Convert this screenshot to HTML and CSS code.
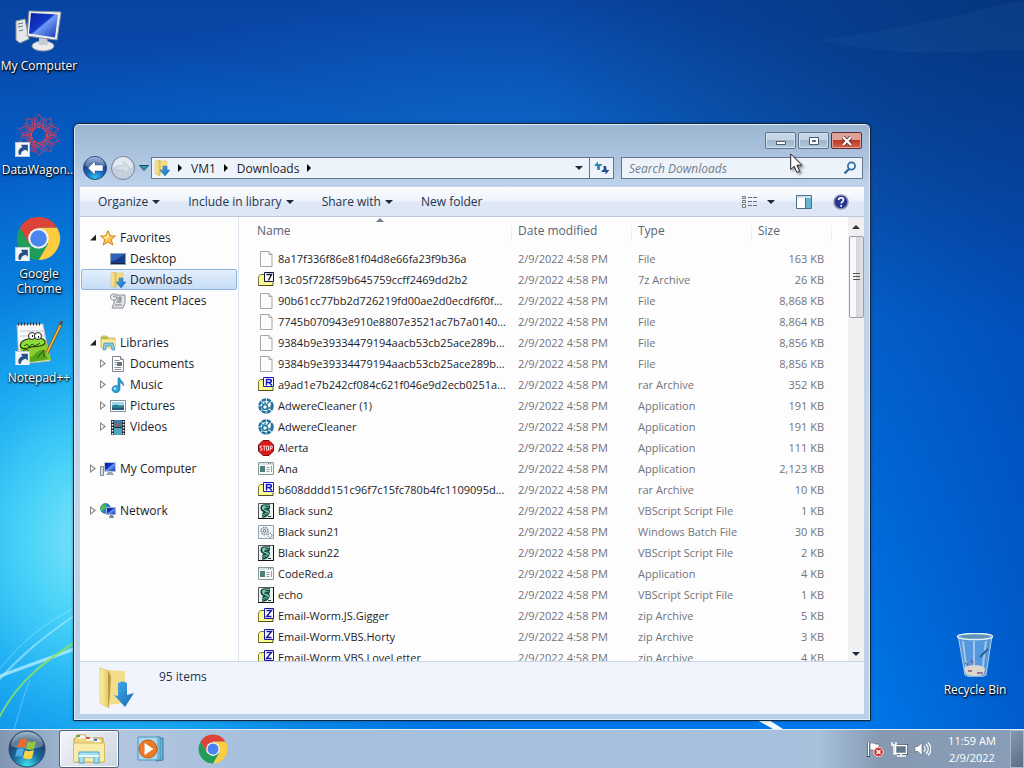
FILE: index.html
```html
<!DOCTYPE html>
<html lang="en">
<head>
  <meta charset="UTF-8" />
  <meta name="viewport" content="width=device-width, initial-scale=1.0" />
  <title>Downloads</title>
  <link rel="stylesheet" href="styles.css">
</head>
<body>
  <!-- shared icons -->
  <svg class="defs" width="0" height="0" aria-hidden="true">
    <defs>
      <linearGradient id="gScreen" x1="0" y1="0" x2="1" y2="1">
        <stop offset="0" stop-color="#0a1f9c" /><stop offset=".45" stop-color="#1238c8" /><stop offset=".5" stop-color="#6f9af5" /><stop offset="1" stop-color="#1535b8" />
      </linearGradient>
      <linearGradient id="gFolder" x1="0" y1="0" x2="1" y2="0">
        <stop offset="0" stop-color="#fbf0a8" /><stop offset="1" stop-color="#e8c65a" />
      </linearGradient>
      <linearGradient id="gArrow" x1="0" y1="0" x2="1" y2="1">
        <stop offset="0" stop-color="#49aeea" /><stop offset="1" stop-color="#1468b8" />
      </linearGradient>
      <radialGradient id="gBack" cx=".5" cy=".95" r=".9">
        <stop offset="0" stop-color="#35c8f4" /><stop offset=".45" stop-color="#1763b4" /><stop offset=".75" stop-color="#163f86" /><stop offset="1" stop-color="#a9c4e6" />
      </radialGradient>
      <radialGradient id="gOrb" cx=".5" cy=".95" r="1">
        <stop offset="0" stop-color="#3fe0f0" /><stop offset=".4" stop-color="#17699c" /><stop offset=".7" stop-color="#1d4169" /><stop offset="1" stop-color="#9db8cc" />
      </radialGradient>
      <symbol id="downloads" viewBox="0 0 16 16">
        <path d="M6 1h7v12H6z" fill="#f2dc86" stroke="#d9bd60" stroke-width=".5" />
        <path d="M1 1l5-1v16l-5-2z" fill="url(#gFolder)" stroke="#cfae50" stroke-width=".5" />
        <path d="M9 6h4v4h3l-5 6-5-6h3z" fill="url(#gArrow)" stroke="#145a9c" stroke-width=".4" />
      </symbol>
      <symbol id="star" viewBox="0 0 16 16">
        <path d="M8 .7l2.200 5 5.300.4-4.100 3.500 1.400 5.400L8 12l-4.800 3 1.400-5.400L.5 6.100l5.300-.4z" fill="#ffc54a" stroke="#c87a16" stroke-width=".9" />
        <path d="M8 3l1.200 3.600-2.600 2.800-3.400-2.600 3.300-.4z" fill="#ffe9a6" />
      </symbol>
      <symbol id="screen" viewBox="0 0 16 16">
        <path d="M0 2h16v12H0z" fill="#8fa2b8" /><path d="M1 3h14v9H1z" fill="#163c8c" /><path d="M1 3h14L4 10H1z" fill="#2f62b8" /><path d="M1 12h14v1H1z" fill="#223" />
      </symbol>
      <symbol id="recent" viewBox="0 0 16 16">
        <path d="M5 2h10v8l-2 5H2l2-5z" fill="#e3e5e8" stroke="#888d95" /><path d="M7 5h5M7 7h5M6 9h5M5 12h7M10 3v7" stroke="#7b818a" />
        <circle cx="3.700" cy="4" r="3.200" fill="#f3f4f6" stroke="#8b9098" /><path d="M3.700 2v2h2" fill="none" stroke="#666" stroke-width=".8" />
      </symbol>
      <symbol id="library" viewBox="0 0 16 16">
        <path d="M1 3l1-2h5l1 2h7v10H1z" fill="#f4d774" stroke="#c7a240" stroke-width=".7" /><path d="M2 5h13v8H2z" fill="#fbeb9e" /><path d="M1 3h7" stroke="#6dbb45" stroke-width="1.300" />
        <path d="M3 15l1-7h9l2 7h-3l-1-4H6.500l-1 4z" fill="#82cbe9" stroke="#368fb8" stroke-width=".7" />
      </symbol>
      <symbol id="document" viewBox="0 0 16 16">
        <path d="M2.500.5h8l3 3v12h-11z" fill="#fff" stroke="#7c858e" /><path d="M10.500 .5v3h3" fill="#dde4ea" stroke="#7c858e" />
        <path d="M4.500 4.500h5M4.500 6.500h2M4.500 8.500h2M4.500 11.500h7M4.500 13.500h7" stroke="#8b949d" /><path d="M7 6h5v4H7z" fill="#60757f" />
      </symbol>
      <symbol id="music" viewBox="0 0 16 16">
        <path d="M8 1h2c0 3 4 3 3.500 8C12.500 6 10.500 6 10 5.500V12a4 3.600 0 1 1-2-3z" fill="#2a9dd2" stroke="#1470a5" stroke-width=".6" /><circle cx="5" cy="11.500" r="1.500" fill="#9be2f6" />
      </symbol>
      <symbol id="picture" viewBox="0 0 16 16">
        <path d="M.5 2.500h15v11H.5z" fill="#fff" stroke="#839099" /><path d="M2 4h12v8H2z" fill="#9bd5ee" /><path d="M2 8c4-3 7 1 12-1v5H2z" fill="#2e7c8b" /><path d="M2 10h12v2H2z" fill="#215a78" />
      </symbol>
      <symbol id="video" viewBox="0 0 16 16">
        <path d="M1 1h14v15H1z" fill="#26282c" /><path d="M4 1h8v7H4z" fill="#397fae" /><path d="M4 9h8v7H4z" fill="#4ba9bd" /><path d="M6 3l5 4H5z" fill="#a55746" />
        <path d="M2.500 2v14M13.500 2v14" stroke="#fff" stroke-width="1.500" stroke-dasharray="1.500 1.500" />
      </symbol>
      <symbol id="pc" viewBox="0 0 16 16">
        <path d="M.5 5.500h3v9h-3z" fill="#d8dde3" stroke="#818995" /><path d="M4 1h12v10H4z" fill="#c1c9d4" /><path d="M5 2h10v8H5z" fill="url(#gScreen)" /><path d="M8 11h4l2 3H6z" fill="#9ba6b4" />
      </symbol>
      <symbol id="network" viewBox="0 0 16 16">
        <circle cx="5.500" cy="5.500" r="5" fill="#2187ca" stroke="#1763a0" stroke-width=".6" /><path d="M2 2c3-2 5 0 4 2S3 6 2 9C0 7 0 4 2 2z" fill="#4fba51" />
        <path d="M6 4h10v8H6z" fill="#a9b6c8" /><path d="M7 5h8v6H7z" fill="url(#gScreen)" /><path d="M10 12h3l1 3H9z" fill="#7a879a" />
      </symbol>
      <symbol id="file" viewBox="0 0 16 16">
        <path d="M2.500.5h8.500l3 3v12H2.500z" fill="#fcfcfc" stroke="#a6a6a6" /><path d="M11 .5v3h3" fill="#e7e7e7" stroke="#a6a6a6" />
      </symbol>
      <symbol id="archive" viewBox="0 0 16 16">
        <path d="M.5 13.500v-9l2-2h4l1 2v9z" fill="#fbfb8c" stroke="#77773c" /><path d="M1 4h14v9H1z" fill="#fafa90" /><path d="M.5 13.500h14.500v-3" fill="none" stroke="#4e4e18" />
      </symbol>
      <symbol id="zip" viewBox="0 0 16 16">
        <use href="#archive" /><path d="M6.500.5h9v10h-9z" fill="#fff" stroke="#1717a0" /><path d="M8.500 2.500h5l-5 6h5" fill="none" stroke="#1717a0" stroke-width="1.400" />
      </symbol>
      <symbol id="seven" viewBox="0 0 16 16">
        <use href="#archive" /><path d="M6.500.5h9v9h-9z" fill="#fff" stroke="#14143c" /><path d="M8.500 2.500h5l-3 6" fill="none" stroke="#14143c" stroke-width="1.400" />
      </symbol>
      <symbol id="rar" viewBox="0 0 16 16">
        <use href="#archive" /><path d="M5.500.5h10v9h-10z" fill="#fff" stroke="#1717c8" /><path d="M8.500 8.500v-6h3c2.500 0 2.500 3 0 3h-3M11 5.500l3 3" fill="none" stroke="#1717c8" stroke-width="1.500" />
      </symbol>
      <symbol id="adware" viewBox="0 0 16 16">
        <circle cx="8" cy="8" r="6.500" fill="#fff" stroke="#1f6f9e" stroke-width="2.400" stroke-dasharray="4.300 .8" />
        <circle cx="7" cy="9" r="2.500" fill="none" stroke="#26799f" stroke-width="1.600" /><path d="M7 3.500v3M2.500 9H5M4 5l2 2M9 6l3-3M10 10h3V7M9 11l2 2" stroke="#26799f" stroke-width="1.300" fill="none" />
      </symbol>
      <symbol id="stop" viewBox="0 0 16 16">
        <path d="M5 .5h6L15.500 5v6L11 15.500H5L.5 11V5z" fill="#dc1717" stroke="#761010" />
        <path d="M4 6H2.200v2h1.600v2.300H2M5 6h2.600M6.300 6v4.500M8.500 6h2v4.200h-2zM12.200 10.500V6h2v2.300h-2" fill="none" stroke="#fff" stroke-width=".8" />
      </symbol>
      <symbol id="app" viewBox="0 0 16 16">
        <path d="M.5 1.500h15v12H.5z" fill="#f8fafa" stroke="#8a9999" /><path d="M1 2h14v2H1z" fill="#dae4e6" /><path d="M2 5h5v6H2z" fill="#4d7f7b" /><path d="M8.500 6.500h3M8.500 8.500h3M8.500 10.500h3M13.500 5v6" stroke="#94a4a4" /><path d="M10 2.500h4" stroke="#708090" stroke-dasharray="1 1" />
      </symbol>
      <symbol id="script" viewBox="0 0 16 16">
        <path d="M.5.5h15v15H.5z" fill="#e9f4ef" stroke="#555" /><path d="M15.500 0v15.500H0" fill="none" stroke="#111" />
        <path d="M12 3.500H7c-3 0-3 3 0 3.500s3 1.500 2 3-3 2.500-5 2.500" fill="none" stroke="#163c38" stroke-width="4.600" />
        <path d="M11.500 3.500H7c-2.500 0-2.500 2.500.5 3.500s2.500 2 1.500 3-2.500 2-5 2.500" fill="none" stroke="#7cd2bd" stroke-width="2.400" />
        <path d="M7 3l4 1M6 6l5 1.500M5 9.500l5 .5M4 12.500l4-1M10 13.500h3M10 6l2-3" stroke="#163c38" stroke-width="1" />
      </symbol>
      <symbol id="batch" viewBox="0 0 16 16">
        <path d="M.5 1.500h15v13H.5z" fill="#f3f7fa" stroke="#93a1ab" /><circle cx="6.500" cy="7" r="3.500" fill="none" stroke="#8995a0" stroke-width="1.800" stroke-dasharray="1.600 .8" /><circle cx="6.500" cy="7" r="1.400" fill="none" stroke="#68747f" /><circle cx="12" cy="11.500" r="2" fill="#fff" stroke="#68747f" stroke-dasharray="1.500 .5" />
      </symbol>
      <symbol id="chrome" viewBox="0 0 48 48">
        <path d="M4.080 12.500A23 23 0 0 1 43.920 12.500H24L14 29.700z" fill="#dc4437" />
        <path d="M43.920 12.500A23 23 0 0 1 24 47L34 29.700 24 12.500z" fill="#fdcd3f" />
        <path d="M24 47A23 23 0 0 1 4.080 12.500L14 29.700 24 35.500l10-5.800z" fill="#1e9e58" />
        <circle cx="24" cy="24" r="11" fill="#f3f3f3" /><circle cx="24" cy="24" r="8.800" fill="#4a84ee" />
      </symbol>
      <symbol id="shortcut" viewBox="0 0 14 14">
        <path d="M.5.5h13v13H.5z" fill="#f4f7fa" stroke="#c1ccd6" /><path d="M3.500 12C2.500 8 4 5.500 7 4.800L5.500 2.500H12V9L10 7.300C7 8 5.500 9.500 5.500 12z" fill="#25528c" />
      </symbol>
      <g id="petal" fill="none">
        <path d="M24 1l3 5-3 5-3-5zM17 5l7 10 7-10M20 12h8" />
      </g>
    </defs>
  </svg>

  <main class="desktop">
    <svg class="wallpaper" viewBox="0 0 1024 729" preserveAspectRatio="none" aria-hidden="true">
      <g fill="none" stroke-linecap="round">
        <path d="M-10 680C20 668 45 660 110 636" stroke="#c9f3ff" stroke-width="3" opacity=".7" />
        <path d="M-10 690C20 655 45 635 90 605" stroke="#c9f3ff" stroke-width="2" opacity=".5" />
        <path d="M-10 682C20 640 45 622 90 600" stroke="#c9f3ff" opacity=".4" />
        <path d="M-4 724C14 685 40 660 110 622" stroke="#86e06a" stroke-width="2" opacity=".9" />
        <path d="M14 729C20 710 22 700 30 680" stroke="#bceeff" opacity=".4" />
      </g>
      <path d="M757 720l16 9h10l-14-9z" fill="#f2fbff" />
      <path d="M820 40C900 30 980 10 1024 0v50C980 50 900 60 820 40z" fill="#5695c2" opacity=".07" />
    </svg>

    <div class="desktop-icons">
      <a class="shortcut" href="#">
        <svg class="desktop-icon" viewBox="0 0 48 44">
          <path d="M1 12l9-2 4 20-9 4-4-3z" fill="#e6e8ea" stroke="#8b929a" /><path d="M3 15l5-1M3 18l5-1M4 22l4-1" stroke="#6d757d" />
          <ellipse cx="28" cy="37" rx="11" ry="5" fill="#e9ebed" stroke="#979ea6" /><path d="M24 28h8l1 8h-9z" fill="#c5cbd1" />
          <path d="M14 2l32 1-4 28-30-4z" fill="#eceef0" stroke="#8d959d" /><path d="M16 4l27 1.500-3 23-26-4z" fill="url(#gScreen)" />
        </svg>
        <span>My Computer</span>
      </a>
      <a class="shortcut" href="#">
        <svg class="desktop-icon" viewBox="0 0 48 44">
          <g stroke="#b8436a" stroke-width=".9">
            <use href="#petal" /><use href="#petal" transform="rotate(36 24 22)" /><use href="#petal" transform="rotate(72 24 22)" /><use href="#petal" transform="rotate(108 24 22)" /><use href="#petal" transform="rotate(144 24 22)" />
            <use href="#petal" transform="rotate(180 24 22)" /><use href="#petal" transform="rotate(216 24 22)" /><use href="#petal" transform="rotate(252 24 22)" /><use href="#petal" transform="rotate(288 24 22)" /><use href="#petal" transform="rotate(324 24 22)" />
          </g>
          <circle cx="24" cy="22" r="8" fill="none" stroke="#d8414f" stroke-width="2" stroke-dasharray="3 1" /><circle cx="24" cy="22" r="12" fill="none" stroke="#b8436a" stroke-dasharray="4 2" />
          <use href="#shortcut" x="0" y="29" width="15" height="15" />
        </svg>
        <span>DataWagon...</span>
      </a>
      <a class="shortcut" href="#">
        <svg class="desktop-icon" viewBox="0 0 48 44"><use href="#chrome" x="1" y="-1" width="45" height="45" /><use href="#shortcut" x="0" y="30" width="15" height="15" /></svg>
        <span>Google Chrome</span>
      </a>
      <a class="shortcut" href="#">
        <svg class="desktop-icon" viewBox="0 0 48 44">
          <path d="M2 4l26-1 7 37-31 3z" fill="#fafafa" stroke="#b5b5b5" /><path d="M5 10h25M5 15h25M5 20h25" stroke="#b9c5e0" /><path d="M3 3h24" stroke="#333" stroke-width="3" stroke-dasharray="1 2" />
          <path d="M5 23l20-6 8 7 3 15-30 3z" fill="#8ccc2c" /><path d="M14 37c6-1 6-8 14-8l5 9-17 3z" fill="#55a71d" />
          <path d="M6 22c3-5 10-4 14-5 6-1 11 2 10 5-2 5-11 2-17 5-6 2-9-1-7-5z" fill="#90dc37" stroke="#233d12" stroke-width="1.200" />
          <circle cx="17" cy="15" r="3.500" fill="#fff" stroke="#222" /><circle cx="23" cy="15" r="3.500" fill="#fff" stroke="#222" /><path d="M17 15h1M23 16h1" stroke="#111" stroke-width="2" />
          <path d="M9 25l3-2 2 3 3-3 3 2 5-3M8 30l3-2 3 2M22 37l7-8v7" stroke="#225316" fill="none" />
          <path d="M32 32L46 3" stroke="#6d431a" stroke-width="3" /><path d="M32 32L46 3" stroke="#efb630" stroke-width="1.800" /><path d="M45 4l2-4" stroke="#54505e" stroke-width="3" />
          <use href="#shortcut" x="0" y="30" width="15" height="15" />
        </svg>
        <span>Notepad++</span>
      </a>
    </div>

    <a class="shortcut recycle" href="#">
      <svg class="desktop-icon" viewBox="0 0 48 44">
        <path d="M7 2l34 1-6 39c-5 3-16 3-21 0z" fill="#9bc4e8" fill-opacity=".55" stroke="#b4d0e5" /><path d="M12 8l4 32M35 8l-4 32M23 8v33" stroke="#ddeefa" opacity=".55" stroke-width="2" />
        <path d="M13 35c5-4 16-4 21 0l-1 6c-5 3-13 3-18 0z" fill="#ddd6cc" /><path d="M14 30l3 2M20 27l2 3M17 38h4M26 40h6" stroke="#875588" stroke-width="1.500" />
        <ellipse cx="24" cy="3.500" rx="17.500" ry="3" fill="#5e92b7" stroke="#dfeff5" stroke-width="1.500" /><path d="M29 24l8-8" stroke="#285f99" stroke-width="2" />
      </svg>
      <span>Recycle Bin</span>
    </a>

    <section class="window">
      <div class="titlebar">
        <button class="caption" aria-label="Minimize"><svg width="12" height="10"><path d="M1.500 5.500h9v3h-9z" fill="#fff" stroke="#4c5b70" /></svg></button>
        <button class="caption" aria-label="Maximize"><svg width="12" height="10"><path d="M1.500 1.500h9v7h-9z" fill="#fff" stroke="#4c5b70" /><path d="M4.500 4.500h3v1h-3z" fill="#9fb5ca" stroke="#4c5b70" /></svg></button>
        <button class="caption close" aria-label="Close"><svg width="12" height="10"><path d="M2 1l8 8M10 1L2 9" stroke="#653034" stroke-width="4" /><path d="M2 1l8 8M10 1L2 9" stroke="#fff" stroke-width="2.300" /></svg></button>
      </div>

      <div class="navbar">
        <div class="history">
          <button class="round" aria-label="Back"><svg viewBox="0 0 24 24"><circle cx="12" cy="12" r="11.500" fill="url(#gBack)" stroke="#26497b" /><path d="M2 10a10.500 9 0 0 1 20 0c-6 2-14 2-20 0z" fill="#fff" opacity=".3" /><path d="M5 12l7-7v4h8v6h-8v4z" fill="#fff" stroke="#295083" stroke-width=".5" /></svg></button>
          <button class="round" aria-label="Forward"><svg viewBox="0 0 24 24"><circle cx="12" cy="12" r="11.500" fill="#c5d1df" stroke="#73849a" /><path d="M2 11a10 10 0 0 1 20 0c-6 2-14 2-20 0z" fill="#e2e8ef" /><path d="M19 12l-6-6v4H5v4h8v4z" fill="#d6dee8" stroke="#b4bfce" stroke-width=".7" /></svg></button>
          <button class="recent-pages" aria-label="Recent pages"><svg width="10" height="8"><path d="M.5 1.500h9L5 6.500z" fill="#2b9cab" stroke="#204a70" /></svg></button>
        </div>
        <div class="address">
          <svg class="icon"><use href="#downloads" /></svg>
          <span class="crumb-arrow"></span>
          <a href="#">VM1</a>
          <span class="crumb-arrow"></span>
          <a href="#">Downloads</a>
          <span class="crumb-arrow"></span>
          <button class="previous" aria-label="Previous locations"><span class="caret"></span></button>
          <button class="refresh" aria-label="Refresh"><svg width="16" height="16"><path d="M0 6l4-4.500V4h4v1.500c-2 0-2.500 1-2 4.500H3.500C3 8 3 7.500 3 6z" fill="#2d86b8" /><path d="M15.500 10l-4 4.500V12h-4v-1.500c2 0 2.500-1 2-4.500H12c.5 2 .5 2.500.5 4z" fill="#244b93" /></svg></button>
        </div>
        <div class="search">
          <input type="text" placeholder="Search Downloads" aria-label="Search Downloads">
          <svg width="14" height="14"><circle cx="8.500" cy="5" r="3.600" fill="#eef7ff" stroke="#326d9c" stroke-width="1.700" /><path d="M6 8l-4.500 4.500" stroke="#326d9c" stroke-width="2.400" /></svg>
        </div>
      </div>

      <div class="toolbar">
        <button>Organize <span class="caret"></span></button>
        <button>Include in library <span class="caret"></span></button>
        <button>Share with <span class="caret"></span></button>
        <button>New folder</button>
        <div class="view-tools">
          <button aria-label="Change your view"><svg width="17" height="14"><path d="M1.500 1.500h3v2h-3zM1.500 5.500h3v2h-3zM1.500 9.500h3v3h-3z" fill="#f7f7f7" stroke="#777" /><path d="M7 2.500h9M7 6.500h9M7 10.500h9" stroke="#65707b" stroke-dasharray="4 1" /></svg></button>
          <button class="view-menu" aria-label="More options"><span class="caret"></span></button>
          <button aria-label="Show the preview pane"><svg width="16" height="14"><path d="M.5.5h15v13H.5z" fill="#fff" stroke="#4d6e8d" /><path d="M1 1h14v2H1z" fill="#d2e0e8" /><path d="M10 3h5v10h-5z" fill="#64b5cf" /><path d="M9.500 3v10" stroke="#4d6e8d" /></svg></button>
          <button aria-label="Get help"><svg width="16" height="16"><circle cx="8" cy="8" r="7" fill="#26358e" stroke="#8c95b5" stroke-width="1.500" /><path d="M5.500 6C6 3 10.500 3.500 10.500 6c0 1.600-2.300 1.700-2.300 3.500M8.200 11v1.700" fill="none" stroke="#fff" stroke-width="1.700" /></svg></button>
        </div>
      </div>

      <div class="content">
        <nav class="sidebar">
          <ul>
            <li><a href="#"><i class="twisty open"></i><svg class="icon"><use href="#star" /></svg>Favorites</a></li>
            <li class="child"><a href="#"><i class="twisty none"></i><svg class="icon"><use href="#screen" /></svg>Desktop</a></li>
            <li class="child selected"><a href="#"><i class="twisty none"></i><svg class="icon"><use href="#downloads" /></svg>Downloads</a></li>
            <li class="child"><a href="#"><i class="twisty none"></i><svg class="icon"><use href="#recent" /></svg>Recent Places</a></li>
          </ul>
          <ul>
            <li><a href="#"><i class="twisty open"></i><svg class="icon"><use href="#library" /></svg>Libraries</a></li>
            <li class="child"><a href="#"><i class="twisty"></i><svg class="icon"><use href="#document" /></svg>Documents</a></li>
            <li class="child"><a href="#"><i class="twisty"></i><svg class="icon"><use href="#music" /></svg>Music</a></li>
            <li class="child"><a href="#"><i class="twisty"></i><svg class="icon"><use href="#picture" /></svg>Pictures</a></li>
            <li class="child"><a href="#"><i class="twisty"></i><svg class="icon"><use href="#video" /></svg>Videos</a></li>
          </ul>
          <ul>
            <li><a href="#"><i class="twisty"></i><svg class="icon"><use href="#pc" /></svg>My Computer</a></li>
          </ul>
          <ul>
            <li><a href="#"><i class="twisty"></i><svg class="icon"><use href="#network" /></svg>Network</a></li>
          </ul>
        </nav>

        <div class="files">
          <table>
            <colgroup><col class="col-name"><col class="col-date"><col class="col-type"><col class="col-size"><col></colgroup>
            <thead>
              <tr><th class="sorted">Name</th><th>Date modified</th><th>Type</th><th>Size</th><td></td></tr>
            </thead>
            <tbody>
              <tr><td><svg class="icon"><use href="#file" /></svg>8a17f336f86e81f04d8e66fa23f9b36a</td><td>2/9/2022 4:58 PM</td><td>File</td><td>163 KB</td></tr>
              <tr><td><svg class="icon"><use href="#seven" /></svg>13c05f728f59b645759ccff2469dd2b2</td><td>2/9/2022 4:58 PM</td><td>7z Archive</td><td>26 KB</td></tr>
              <tr><td><svg class="icon"><use href="#file" /></svg>90b61cc77bb2d726219fd00ae2d0ecdf6f0f...</td><td>2/9/2022 4:58 PM</td><td>File</td><td>8,868 KB</td></tr>
              <tr><td><svg class="icon"><use href="#file" /></svg>7745b070943e910e8807e3521ac7b7a0140...</td><td>2/9/2022 4:58 PM</td><td>File</td><td>8,864 KB</td></tr>
              <tr><td><svg class="icon"><use href="#file" /></svg>9384b9e39334479194aacb53cb25ace289b...</td><td>2/9/2022 4:58 PM</td><td>File</td><td>8,856 KB</td></tr>
              <tr><td><svg class="icon"><use href="#file" /></svg>9384b9e39334479194aacb53cb25ace289b...</td><td>2/9/2022 4:58 PM</td><td>File</td><td>8,856 KB</td></tr>
              <tr><td><svg class="icon"><use href="#rar" /></svg>a9ad1e7b242cf084c621f046e9d2ecb0251a...</td><td>2/9/2022 4:58 PM</td><td>rar Archive</td><td>352 KB</td></tr>
              <tr><td><svg class="icon"><use href="#adware" /></svg>AdwereCleaner (1)</td><td>2/9/2022 4:58 PM</td><td>Application</td><td>191 KB</td></tr>
              <tr><td><svg class="icon"><use href="#adware" /></svg>AdwereCleaner</td><td>2/9/2022 4:58 PM</td><td>Application</td><td>191 KB</td></tr>
              <tr><td><svg class="icon"><use href="#stop" /></svg>Alerta</td><td>2/9/2022 4:58 PM</td><td>Application</td><td>111 KB</td></tr>
              <tr><td><svg class="icon"><use href="#app" /></svg>Ana</td><td>2/9/2022 4:58 PM</td><td>Application</td><td>2,123 KB</td></tr>
              <tr><td><svg class="icon"><use href="#rar" /></svg>b608dddd151c96f7c15fc780b4fc1109095d...</td><td>2/9/2022 4:58 PM</td><td>rar Archive</td><td>10 KB</td></tr>
              <tr><td><svg class="icon"><use href="#script" /></svg>Black sun2</td><td>2/9/2022 4:58 PM</td><td>VBScript Script File</td><td>1 KB</td></tr>
              <tr><td><svg class="icon"><use href="#batch" /></svg>Black sun21</td><td>2/9/2022 4:58 PM</td><td>Windows Batch File</td><td>30 KB</td></tr>
              <tr><td><svg class="icon"><use href="#script" /></svg>Black sun22</td><td>2/9/2022 4:58 PM</td><td>VBScript Script File</td><td>2 KB</td></tr>
              <tr><td><svg class="icon"><use href="#app" /></svg>CodeRed.a</td><td>2/9/2022 4:58 PM</td><td>Application</td><td>4 KB</td></tr>
              <tr><td><svg class="icon"><use href="#script" /></svg>echo</td><td>2/9/2022 4:58 PM</td><td>VBScript Script File</td><td>1 KB</td></tr>
              <tr><td><svg class="icon"><use href="#zip" /></svg>Email-Worm.JS.Gigger</td><td>2/9/2022 4:58 PM</td><td>zip Archive</td><td>5 KB</td></tr>
              <tr><td><svg class="icon"><use href="#zip" /></svg>Email-Worm.VBS.Horty</td><td>2/9/2022 4:58 PM</td><td>zip Archive</td><td>3 KB</td></tr>
              <tr><td><svg class="icon"><use href="#zip" /></svg>Email-Worm.VBS.LoveLetter</td><td>2/9/2022 4:58 PM</td><td>zip Archive</td><td>4 KB</td></tr>
            </tbody>
          </table>
        </div>

        <div class="scrollbar">
          <span class="caret up"></span>
          <div class="thumb"></div>
          <span class="caret"></span>
        </div>
      </div>

      <footer class="details">
        <svg class="details-icon" viewBox="0 0 36 42">
          <path d="M9 3l17 1v32l-17 2z" fill="#f3dd8b" /><path d="M1 1l9 3v37l-9-5z" fill="url(#gFolder)" stroke="#d7bc62" stroke-width=".6" /><path d="M9 4l3 5-1 20-2 12z" fill="#b99b45" />
          <path d="M19 16c3-2 6-2 9 0v12l7-2-9 14-11-12 4 1z" fill="url(#gArrow)" />
        </svg>
        <span>95 items</span>
      </footer>
    </section>

    <svg class="cursor" width="14" height="21" aria-hidden="true"><path d="M.7 1v15.500l3.500-3.300 2.700 6.200 2.700-1.200-2.700-6h5z" fill="#fff" stroke="#222" /></svg>
  </main>

  <footer class="taskbar">
    <button class="start" aria-label="Start">
      <svg viewBox="0 0 38 38">
        <circle cx="19" cy="19" r="18" fill="url(#gOrb)" stroke="#2a4560" /><path d="M3 16a16 14 0 0 1 32 0c-9 4-23 4-32 0z" fill="#fff" opacity=".3" />
        <path d="M12 10c3-2 5-1 7 0l-2 8c-2-1-5-2-8 0z" fill="#ee6a2c" /><path d="M20 11c3 2 6 1 8 0l-2 8c-3 1-5 1-8 0z" fill="#95c840" />
        <path d="M9 19c3-1 5-1 7 0l-2 8c-2-1-5-1-7 0z" fill="#4fa9e6" /><path d="M17 20c3 2 6 1 9 0l-2 8c-3 2-6 1-9 0z" fill="#fbd345" />
      </svg>
    </button>
    <button class="task active" aria-label="Windows Explorer">
      <svg viewBox="0 0 34 30">
        <path d="M4 3l1-2h8l2 3h16v24H2V5z" fill="#efd780" stroke="#b89a47" /><path d="M6 3h7M14 5h7M22 7h6" stroke="#fff" stroke-width="3" /><path d="M5 2h3" stroke="#4caa45" stroke-width="2" /><path d="M14 4h4" stroke="#df5138" stroke-width="2" /><path d="M22 6h3" stroke="#4176c4" stroke-width="2" />
        <path d="M1.500 9h31v19h-31z" fill="#f9eba8" stroke="#d7bc62" /><path d="M7 29V18h20v11h-5v-6H12v6z" fill="#a6def1" stroke="#4ca5c8" /><path d="M7 22h20" stroke="#e6faff" stroke-width="2" />
      </svg>
    </button>
    <button class="task" aria-label="Windows Media Player">
      <svg viewBox="0 0 34 30">
        <path d="M25 4h4v22l-7 1z" fill="#6eb6d8" stroke="#39779f" /><path d="M22 3h4v23h-4z" fill="#9bd6ec" stroke="#3f88ae" /><path d="M4 3h20v23H4z" fill="#a8d9ec" stroke="#4e96ba" />
        <circle cx="14" cy="15" r="9" fill="#ed7a26" stroke="#c85a13" /><path d="M10.500 9l9 6-9 6z" fill="#fff" />
      </svg>
    </button>
    <button class="task" aria-label="Google Chrome"><svg viewBox="0 0 34 30"><use href="#chrome" x="2" y="0" width="30" height="30" /></svg></button>

    <div class="tray">
      <svg width="18" height="16"><path d="M1.500 1v15" stroke="#35414e" stroke-width="3" /><path d="M1.500 1v14" stroke="#fff" stroke-width="1.500" /><path d="M3 2c4-1 5 2 9 1v7c-4 1-5-2-9-1z" fill="#fff" stroke="#56616d" stroke-width=".6" /><circle cx="11.500" cy="11" r="4.700" fill="#cf3232" stroke="#f5d5d1" /><path d="M9.500 9l4 4M13.500 9l-4 4" stroke="#fff" stroke-width="1.400" /></svg>
      <svg width="17" height="16"><path d="M4.500 4.500h11v8h-11z" fill="none" stroke="#3c4a59" stroke-width="3" /><path d="M4.500 4.500h11v8h-11z" fill="#64788d" stroke="#fff" stroke-width="1.500" /><path d="M10 13v2M6 15h9M1 1v3h4V1M3 4v9h3" fill="none" stroke="#fff" stroke-width="1.500" /></svg>
      <svg width="17" height="16"><path d="M1 5.500h3L8 1.500v13l-4-4H1z" fill="#fff" stroke="#526174" stroke-width=".6" /><path d="M10 5c1.500 2 1.500 4 0 6M12 3c3 3 3 7 0 10M14 1.500c4 4 4 9 0 13" fill="none" stroke="#fff" stroke-width="1.100" /></svg>
    </div>
    <div class="clock"><span>11:59 AM</span><span>2/9/2022</span></div>
    <button class="show-desktop" aria-label="Show desktop"></button>
  </footer>
</body>
</html>
```
FILE: styles.css
```css
* {
  box-sizing: border-box;
}

body {
  margin: 0;
  height: 100vh;
  display: flex;
  flex-direction: column;
  overflow: hidden;
  font-family: "Open Sans", "Noto Sans", sans-serif;
  font-size: 12px;
  line-height: 15px;
  color: #1e1e28;
}

button {
  margin: 0;
  padding: 0;
  border: 0;
  background: none;
  font: inherit;
  color: inherit;
}

a {
  color: inherit;
  text-decoration: none;
}

.defs {
  position: absolute;
}

.icon {
  width: 16px;
  height: 16px;
  flex: none;
}

.caret {
  display: inline-block;
  border: 4px solid transparent;
  border-top-color: #1c2b40;
  border-bottom: 0;
}

.caret.up {
  border-top: 0;
  border-bottom: 4px solid #333;
}

/* desktop */
.desktop {
  position: relative;
  flex: 1;
  overflow: hidden;
  background:
    radial-gradient(circle at 11% 74%, #90e8fa 0, #48d2f8 90px, #1eaef2 170px, rgba(10, 138, 228, .8) 260px, rgba(0, 110, 220, .4) 380px, rgba(0, 100, 220, 0) 500px),
    radial-gradient(ellipse 500px 330px at 100% 0, rgba(6, 50, 112, .75), rgba(6, 56, 130, 0)),
    linear-gradient(90deg, rgba(0, 50, 160, 0) 84%, rgba(0, 60, 170, .45) 100%),
    radial-gradient(ellipse 420px 160px at 48% 20%, rgba(20, 120, 215, .5), rgba(20, 120, 215, 0)),
    linear-gradient(180deg, #0843a2 0, #0757bd 28%, #0066d4 60%, #0078ea 100%);
}

.wallpaper {
  position: absolute;
  width: 100%;
  height: 100%;
}

.desktop-icons {
  position: relative;
  display: grid;
  grid-auto-rows: 104px;
  width: 78px;
}

.shortcut {
  display: flex;
  flex-direction: column;
  align-items: center;
  gap: 5px;
  padding-top: 9px;
  color: #fff;
  text-align: center;
  text-shadow: 1px 1px 2px #000, 0 1px 2px #000;
}

.desktop-icon {
  width: 48px;
  height: 44px;
}

.recycle {
  position: absolute;
  right: 10px;
  bottom: 32px;
  width: 78px;
}

/* explorer window */
.window {
  position: absolute;
  top: 123px;
  right: 153px;
  bottom: 8px;
  left: 73px;
  display: flex;
  flex-direction: column;
  padding: 0 6px 6px;
  border: 1px solid #15263b;
  border-radius: 6px 6px 0 0;
  background: linear-gradient(180deg, #9bb6d0 0, #a9c1dc 28px, #bfd3ec 64px, #c3d3ea 60%, #b7d0e8 100%);
  box-shadow: inset 0 0 0 1px #dcecf8, 0 0 3px rgba(0, 20, 60, .4);
}

.titlebar {
  display: flex;
  justify-content: flex-end;
  gap: 2px;
  height: 32px;
  padding: 8px 2px 0;
}

.caption {
  display: flex;
  align-items: center;
  justify-content: center;
  width: 31px;
  height: 17px;
  border: 1px solid #60738d;
  border-radius: 2px;
  background: linear-gradient(#c5d5e5 45%, #9eb5cc 50%, #b4c9dc);
  box-shadow: inset 0 0 0 1px #d5e2ee;
}

.caption.close {
  border-color: #642c37;
  background: linear-gradient(#dda399 45%, #bd3826 50%, #d4674d);
  box-shadow: inset 0 0 0 1px #dfa297;
}

.navbar {
  display: flex;
  align-items: center;
  height: 24px;
  margin-bottom: 7px;
}

.history {
  display: flex;
  align-items: center;
  gap: 4px;
  width: 71px;
  padding-left: 3px;
}

.round {
  width: 24px;
  height: 24px;
}

.round svg,
.recent-pages svg {
  display: block;
}

.address {
  display: flex;
  flex: 1;
  align-items: center;
  height: 22px;
  padding-left: 2px;
  border: 1px solid #63768e;
  background: #edf3fb;
}

.crumb-arrow {
  margin: 0 9px 0 8px;
  border: 4px solid transparent;
  border-left-color: #000;
  border-right: 0;
}

.previous {
  display: grid;
  place-items: center;
  width: 20px;
  height: 20px;
  margin-left: auto;
}

.refresh {
  display: grid;
  place-items: center;
  width: 24px;
  height: 20px;
  border-left: 1px solid #63768e;
}

.search {
  display: flex;
  align-items: center;
  width: 242px;
  height: 22px;
  margin: 0 1px 0 7px;
  padding: 0 5px 0 7px;
  border: 1px solid #63768e;
  background: #edf3fb;
}

.search input {
  flex: 1;
  min-width: 0;
  padding: 0;
  border: 0;
  background: none;
  font: inherit;
}

.search input::placeholder {
  color: #747d89;
  font-style: italic;
}

.toolbar {
  display: flex;
  align-items: center;
  gap: 28px;
  height: 30px;
  padding: 0 15px 0 18px;
  border-bottom: 1px solid #bdc9d9;
  background: linear-gradient(#fcfdff 0, #eff4fc 45%, #dfe7f5 55%, #dde7f5 100%);
  color: #26354f;
}

.toolbar button {
  display: flex;
  align-items: center;
  gap: 4px;
}

.view-tools {
  display: flex;
  align-items: center;
  gap: 21px;
  margin-left: auto;
}

.toolbar .view-menu {
  margin-left: -12px;
}

.content {
  display: flex;
  flex: 1;
  min-height: 0;
  background: #fdfdfe;
}

/* navigation pane */
.sidebar {
  flex: none;
  width: 159px;
  padding: 10px 1px 0;
  border-right: 1px solid #dce4ef;
}

.sidebar ul {
  margin: 0 0 21px;
  padding: 0;
  list-style: none;
}

.sidebar a {
  display: flex;
  align-items: center;
  gap: 4px;
  height: 21px;
  padding-left: 8px;
  border: 1px solid transparent;
  border-radius: 2px;
}

.sidebar .child a {
  padding-left: 18px;
}

.sidebar .selected a {
  border-color: #8db4df;
  background: linear-gradient(#e4effc, #c6dcf6);
}

.twisty {
  width: 6px;
  height: 9px;
  background: #858585;
  clip-path: polygon(evenodd, 0 0, 100% 50%, 0 100%, 0 0, 1px 2px, 4px 50%, 1px 7px, 1px 2px);
}

.twisty.open {
  height: 6px;
  background: #222;
  clip-path: polygon(100% 0, 100% 100%, 0 100%);
}

.twisty.none {
  visibility: hidden;
}

/* file list */
.files {
  flex: 1;
  min-width: 0;
  overflow: hidden;
}

table {
  width: 100%;
  border-collapse: collapse;
  table-layout: fixed;
  font-size: 11px;
}

.col-name {
  width: 273px;
}

.col-date,
.col-type {
  width: 120px;
}

.col-size {
  width: 80px;
}

th {
  position: relative;
  height: 31px;
  padding: 0 6px 5px;
  background: linear-gradient(#fff, #dfe6ee) right top / 1px 24px no-repeat;
  color: #5b6472;
  font-size: 12px;
  font-weight: normal;
  text-align: left;
}

th:first-child {
  padding-left: 18px;
}

.sorted::after {
  content: "";
  position: absolute;
  top: 1px;
  left: 50%;
  border: 4px solid transparent;
  border-top: 0;
  border-bottom-color: #75828f;
}

tbody td {
  height: 21px;
  padding: 0 6px;
  color: #73737a;
  white-space: nowrap;
}

tbody td:first-child {
  display: flex;
  align-items: center;
  gap: 4px;
  padding: 0 0 0 19px;
  color: #1e1e28;
}

tbody td:nth-child(4) {
  padding-right: 8px;
  text-align: right;
}

.scrollbar {
  display: flex;
  flex-direction: column;
  align-items: center;
  width: 16px;
  padding: 8px 0 5px;
  background: #f0f0f2;
}

.thumb {
  width: 15px;
  height: 82px;
  margin: 7px 0 auto;
  border: 1px solid #9a9ca0;
  border-radius: 2px;
  background:
    repeating-linear-gradient(#555 0 1px, transparent 1px 3px) center / 7px 8px no-repeat,
    linear-gradient(90deg, #f8f8f9 45%, #d6d8dc 50%, #e1e2e6);
}

.details {
  display: flex;
  gap: 24px;
  height: 53px;
  padding: 5px 19px;
  border-top: 1px solid #ccd6e4;
  background: #f1f4fd;
  color: #26354f;
}

.details span {
  margin-top: 2px;
}

.details-icon {
  width: 36px;
  height: 42px;
}

.cursor {
  position: absolute;
  top: 153px;
  left: 790px;
  filter: drop-shadow(2px 2px 1px rgba(0, 0, 0, .4));
}

/* taskbar */
.taskbar {
  display: flex;
  align-items: center;
  height: 39px;
  border-top: 1px solid #e0ebf5;
  background: linear-gradient(90deg, #8196b3 0, #9cb3ce 60px, #b1c5df 120px, #a5bfdc 260px, #a7c0dc 80%, #8699b1 86%, #8a9db8 100%);
  box-shadow: 0 -1px 0 #28517e;
}

.start {
  width: 59px;
  height: 38px;
  padding-left: 8px;
}

.start svg {
  display: block;
  width: 38px;
  height: 38px;
}

.task {
  display: grid;
  place-items: center;
  width: 60px;
  height: 38px;
  margin-right: 2px;
  border: 1px solid transparent;
  border-radius: 3px;
}

.task svg {
  width: 34px;
  height: 30px;
}

.task.active {
  border-color: #4d6480;
  background: linear-gradient(135deg, #f3f5f8, #ccd5e0);
  box-shadow: inset 0 0 0 1px #fff;
}

.tray {
  display: flex;
  gap: 6px;
  margin-left: auto;
  padding-right: 3px;
}

.clock {
  display: flex;
  flex-direction: column;
  width: 76px;
  color: #fff;
  font-size: 11px;
  line-height: 17px;
  text-align: center;
}

.show-desktop {
  width: 14px;
  height: 38px;
  border: 1px solid #a9b9cb;
  background: linear-gradient(135deg, #8498af, #596d88);
}
```
